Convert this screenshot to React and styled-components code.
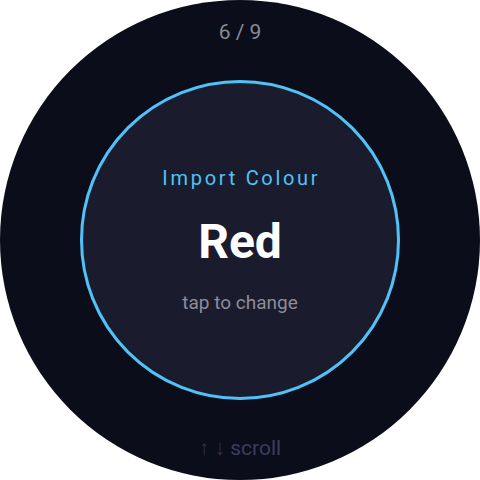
import React from 'react';
import styled, { createGlobalStyle } from 'styled-components';

const Global = createGlobalStyle`
  html, body {
    margin: 0;
    padding: 0;
    background: #ffffff;
  }
  body {
    font-family: Roboto, "Liberation Sans", sans-serif;
  }
`;

const Watch = styled.div`
  width: 480px;
  height: 480px;
  border-radius: 50%;
  background: #0c0d1a;
  display: flex;
  flex-direction: column;
  align-items: center;
  justify-content: center;
  gap: 38px;
`;

const Label = styled.div`
  height: 20px;
  line-height: 20px;
  font-size: 21px;
  color: ${p => p.$color};
`;

const Ring = styled.div`
  box-sizing: border-box;
  width: 320px;
  height: 320px;
  border-radius: 50%;
  border: 3px solid #4fc3f7;
  background: #1b1b2e;
  display: flex;
  flex-direction: column;
  align-items: center;
  justify-content: center;
`;

const Title = styled.div`
  font-size: 20px;
  line-height: 21px;
  letter-spacing: 2.7px;
  margin-right: -2.7px;
  color: #4fc3f7;
`;

const Value = styled.div`
  margin-top: 25px;
  font-size: 48px;
  line-height: 56px;
  font-weight: 700;
  color: #ffffff;
`;

const Hint = styled.div`
  margin-top: 22px;
  margin-bottom: -2px;
  font-size: 19px;
  line-height: 22px;
  color: #8d8d99;
`;

const Arrows = styled.span`
  color: #2e2f4a;
`;

export default function App() {
  return (
    <>
      <Global />
      <Watch>
        <Label $color="#8a8a94">6 / 9</Label>
        <Ring>
          <Title>Import Colour</Title>
          <Value>Red</Value>
          <Hint>tap to change</Hint>
        </Ring>
        <Label $color="#3b3c5e">
          <Arrows>↑ ↓</Arrows> scroll
        </Label>
      </Watch>
    </>
  );
}
